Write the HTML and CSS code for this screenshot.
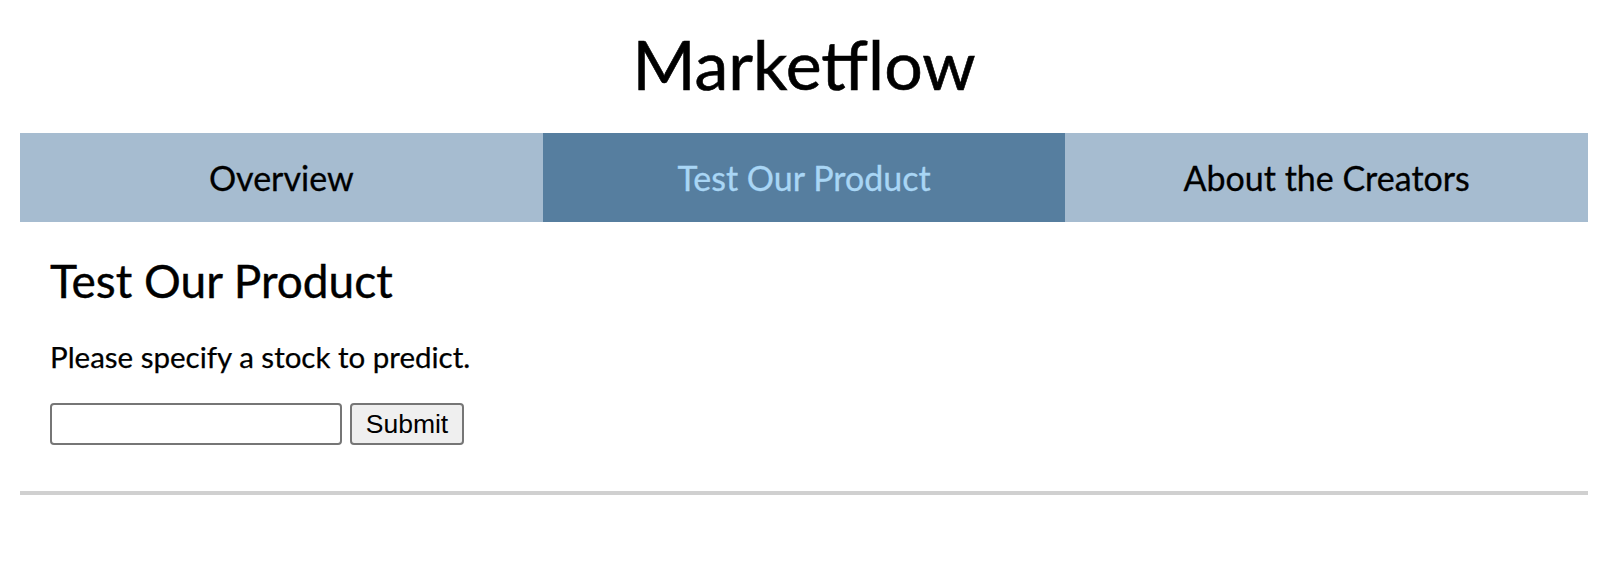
FILE: index.html
```html
<!DOCTYPE html>
<html>
<head>
<meta charset="utf-8">
<title>Marketflow</title>
<link rel="stylesheet" href="styles.css">
</head>
<body>
<div class="page">
  <h1 class="brand">Marketflow</h1>
  <nav class="tabs">
    <a class="tab">Overview</a>
    <a class="tab active">Test Our Product</a>
    <a class="tab">About the Creators</a>
  </nav>
  <section class="content">
    <h2 class="heading">Test Our Product</h2>
    <p class="lead">Please specify a stock to predict.</p>
    <form class="form">
      <input class="field" type="text">
      <button class="submit" type="button">Submit</button>
    </form>
  </section>
  <div class="rule"></div>
</div>
</body>
</html>
```
FILE: styles.css
```css
html, body {
  margin: 0;
  padding: 0;
  background: #ffffff;
}
body {
  font-family: Lato, "Noto Sans", sans-serif;
  color: #000;
}
.page {
  width: 1568px;
  margin-left: 20px;
}
.brand {
  margin: 23px 0 0 0;
  font-size: 68px;
  line-height: 82px;
  font-weight: 400;
  text-align: center;
  -webkit-text-stroke: 0.6px currentColor;
}
.tabs {
  margin-top: 28px;
  display: flex;
  height: 89px;
  background: #a6bcd0;
}
.tab {
  flex: 1;
  display: flex;
  align-items: center;
  justify-content: center;
  font-size: 34px;
  color: #000;
  text-decoration: none;
  -webkit-text-stroke: 0.3px currentColor;
}
.tab.active {
  background: #567e9f;
  color: #a9d6f5;
}
.content {
  padding: 0 30px;
}
.heading {
  margin: 31px 0 0 0;
  font-size: 46px;
  line-height: 56px;
  font-weight: 400;
  -webkit-text-stroke: 0.4px currentColor;
}
.lead {
  margin: 30px 0 0 0;
  font-size: 29.5px;
  line-height: 36px;
  -webkit-text-stroke: 0.25px currentColor;
}
.form {
  display: flex;
  gap: 8px;
  margin-top: 28px;
}
.field {
  box-sizing: border-box;
  width: 292px;
  height: 42px;
  margin: 0;
  border: 2px solid #767676;
  border-radius: 4px;
  font-family: "Liberation Sans", Arial, sans-serif;
  font-size: 26px;
  padding: 2px 4px;
  background: #fff;
}
.submit {
  box-sizing: border-box;
  width: 114px;
  height: 42px;
  margin: 0;
  border: 2px solid #767676;
  border-radius: 4px;
  background: #efefef;
  font-family: "Liberation Sans", Arial, sans-serif;
  font-size: 26.5px;
  color: #000;
  padding: 0;
}
.rule {
  margin-top: 46px;
  height: 4px;
  background: #d0d0d0;
}
```
